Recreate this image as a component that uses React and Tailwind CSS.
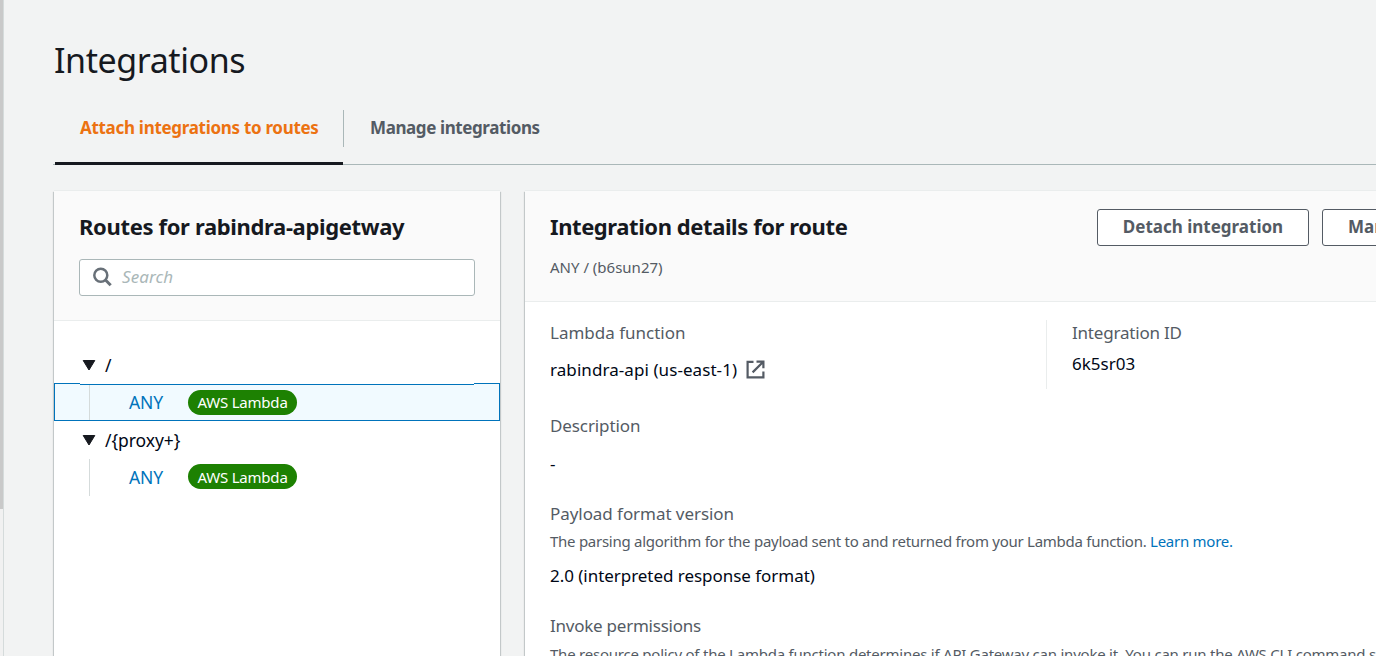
import React from "react";

const Caret = () => (
  <svg className="block h-3 w-[14px]" viewBox="0 0 14 12">
    <path d="M1.2 1.5h11.6L7 11z" fill="#16191f" stroke="#16191f" strokeWidth="1" strokeLinejoin="round" />
  </svg>
);

const RouteGroup = ({ path, selected }) => (
  <li>
    <div className={selected ? "flex h-[37px] items-center pl-7" : "flex h-[38px] items-center pl-7"}>
      <Caret />
      <span className="ml-[9px] text-[17.5px] tracking-[-0.05px] text-[#000716]">{path}</span>
    </div>
    <div
      className={
        selected
          ? "relative flex h-[38px] border border-[#0073bb] bg-[#f1faff] pl-[34px]"
          : "flex h-[37px] pl-[35px]"
      }
    >
      {selected && <div className="absolute top-[-1px] right-[25px] left-[25px] h-[2px] border-b border-[#0073bb] bg-white" />}
      <div
        className={
          selected
            ? "flex h-full items-center border-l border-[#d5dbdb] pl-[39px]"
            : "flex h-full items-center border-l border-[#d5dbdb] pb-0.5 pl-[39px]"
        }
      >
        <span className="w-[59px] text-[17.5px] tracking-[-0.1px] text-[#0073bb]">ANY</span>
        <span className="flex h-[25px] w-[109px] items-center justify-center rounded-full bg-[#1d8102] text-[15px] tracking-[-0.2px] whitespace-nowrap text-white">
          AWS Lambda
        </span>
      </div>
    </div>
  </li>
);

export default function App() {
  return (
    <div className="flex h-[656px] w-[1376px] overflow-hidden bg-[#f2f3f3] font-['Noto_Sans',sans-serif] text-[17px] leading-6 whitespace-nowrap text-[#16191f]">
      <div className="h-full w-1 shrink-0 border-r border-[#d5dbdb] bg-[#f1f1f1]">
        <div className="h-[509px] bg-[#c9c9c9]" />
      </div>
      <main className="w-[1500px] shrink-0 pl-[49px]">
        <h1 className="h-[110px] pt-[38px] pl-px text-[34px] leading-[44px] tracking-[-0.43px]">Integrations</h1>
        <nav className="flex h-[55px] border-b border-[#aab7b8] pl-0.5 font-bold">
          <div className="h-[55px] w-[288px] border-b-[3px] border-[#16191f]">
            <div className="h-[37px] pt-[6px] pl-[25px] tracking-[-0.3px] text-[#ec7211]">Attach integrations to routes</div>
          </div>
          <div className="h-[37px] border-l border-[#aab7b8] pt-[6px] pl-[26px] tracking-[-0.4px] text-[#545b64]">
            Manage integrations
          </div>
        </nav>
        <div className="mt-[26px] flex gap-[25px] pl-px">
          <section className="h-[600px] w-[446px] shrink-0 bg-white shadow-[0_1px_1px_0_rgba(0,28,36,0.3),1px_1px_1px_0_rgba(0,28,36,0.15),-1px_1px_1px_0_rgba(0,28,36,0.15),0_-1px_0_0_#eaeded]">
            <header className="h-[130px] border-b border-[#eaeded] bg-[#fafafa] px-[25px] pt-[19px]">
              <h2 className="text-[22px] leading-8 font-bold tracking-[-0.35px]">Routes for rabindra-apigetway</h2>
              <div className="mt-[17px] flex h-[37px] items-center rounded-[3px] border border-[#aab7b8] bg-white pl-[13px]">
                <svg className="-mt-px h-5 w-5" viewBox="0 0 20 20" fill="none" stroke="#687078" strokeWidth="2.5">
                  <circle cx="7.8" cy="8.3" r="6.5" />
                  <path d="M12.5 13l5.2 5.2" strokeWidth="3" />
                </svg>
                <span className="mb-0.5 ml-[9px] tracking-[0.1px] text-[#aab7b8] italic">Search</span>
              </div>
            </header>
            <ul className="pt-[25px]">
              <RouteGroup path="/" selected />
              <RouteGroup path="/{proxy+}" />
            </ul>
          </section>
          <section className="h-[600px] w-[1100px] shrink-0 bg-white shadow-[0_1px_1px_0_rgba(0,28,36,0.3),1px_1px_1px_0_rgba(0,28,36,0.15),-1px_1px_1px_0_rgba(0,28,36,0.15),0_-1px_0_0_#eaeded]">
            <header className="flex h-[111px] border-b border-[#eaeded] bg-[#fafafa] pl-[25px]">
              <div className="w-[547px] shrink-0 pt-[19px]">
                <h2 className="text-[22px] leading-8 font-bold tracking-[-0.42px]">Integration details for route</h2>
                <p className="mt-[13px] text-[15px] text-[#545b64]">ANY / (b6sun27)</p>
              </div>
              <div className="flex shrink-0 gap-[13px] pt-[18px] font-bold text-[#545b64]">
                <button className="h-[37px] w-[212px] rounded-[3px] border border-[#545b64] bg-white pb-0.5">Detach integration</button>
                <button className="h-[37px] w-[220px] rounded-[3px] border border-[#545b64] bg-white pb-0.5 pl-[25px] text-left">
                  Manage integration
                </button>
              </div>
            </header>
            <div className="flex h-[88px] pt-[19px] pl-[25px]">
              <div className="w-[496px]">
                <div className="text-[#545b64]">Lambda function</div>
                <div className="mt-[13px] flex items-center text-[#000716]">
                  <span className="tracking-[0.07px]">rabindra-api (us-east-1)</span>
                  <svg className="-mt-px ml-[9px] h-[19px] w-[19px]" viewBox="0 0 19 19" fill="none" stroke="#545b64" strokeWidth="2.2">
                    <path d="M7.5 1.8H1.6v15.6h15.8v-6M10.5 1.6h6.9v6.7M17 2L6.6 12.4" />
                  </svg>
                </div>
              </div>
              <div className="-mt-px h-[69px] border-l border-[#eaeded] pt-px pl-[25px]">
                <div className="tracking-[-0.2px] text-[#545b64]">Integration ID</div>
                <div className="mt-[7px] text-[#000716]">6k5sr03</div>
              </div>
            </div>
            <div className="pt-[24px] pl-[25px] text-[#000716]">
              <div className="tracking-[-0.1px] text-[#545b64]">Description</div>
              <div className="mt-[14px]">-</div>
              <div className="mt-[26px] tracking-[-0.06px] text-[#545b64]">Payload format version</div>
              <div className="mt-[3px] text-[15px] tracking-[-0.265px] text-[#545b64]">
                The parsing algorithm for the payload sent to and returned from your Lambda function.{" "}
                <span className="text-[#0073bb]">Learn more.</span>
              </div>
              <div className="mt-[11px] tracking-[-0.04px]">2.0 (interpreted response format)</div>
              <div className="mt-[26px] tracking-[-0.24px] text-[#545b64]">Invoke permissions</div>
              <div className="mt-[4px] text-[15px] tracking-[-0.23px] text-[#545b64]">
                The resource policy of the Lambda function determines if API Gateway can invoke it. You can run the AWS CLI command shown
              </div>
            </div>
          </section>
        </div>
      </main>
    </div>
  );
}
